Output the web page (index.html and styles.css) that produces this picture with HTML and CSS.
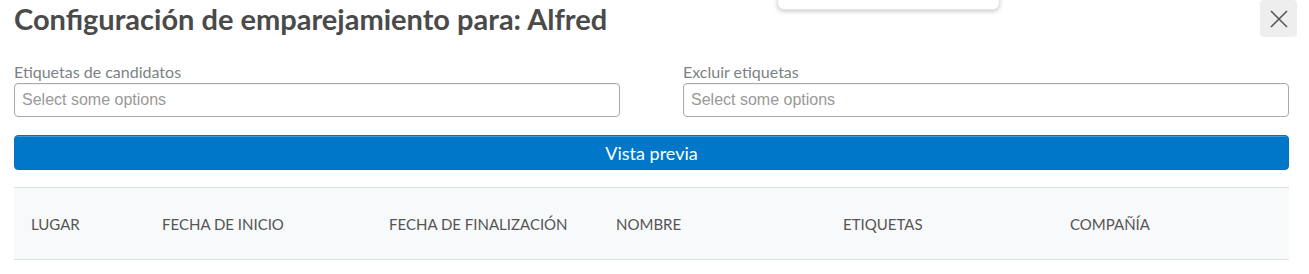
FILE: index.html
```html
<!DOCTYPE html>
<html lang="es">
<head>
<meta charset="utf-8">
<title>Configuración de emparejamiento</title>
<link rel="stylesheet" href="styles.css">
</head>
<body>
<div class="popup-tail"></div>
<div class="modal">
  <header class="modal-header">
    <h1 class="modal-title">Configuración de emparejamiento para: Alfred</h1>
    <button class="close-btn" type="button" aria-label="Cerrar">
      <svg width="18" height="18" viewBox="0 0 18 18"><path d="M1 1 L17 17 M17 1 L1 17" stroke="#555" stroke-width="1.6" fill="none"/></svg>
    </button>
  </header>
  <div class="filters">
    <div class="field">
      <label class="field-label">Etiquetas de candidatos</label>
      <div class="select">Select some options</div>
    </div>
    <div class="field">
      <label class="field-label">Excluir etiquetas</label>
      <div class="select">Select some options</div>
    </div>
  </div>
  <button class="preview-btn" type="button">Vista previa</button>
  <table class="results">
    <thead>
      <tr>
        <th class="c1">LUGAR</th>
        <th class="c2">FECHA DE INICIO</th>
        <th class="c2">FECHA DE FINALIZACIÓN</th>
        <th class="c2">NOMBRE</th>
        <th class="c2">ETIQUETAS</th>
        <th>COMPAÑÍA</th>
      </tr>
    </thead>
  </table>
</div>
</body>
</html>
```
FILE: styles.css
```css
html, body {
  margin: 0;
  padding: 0;
  background: #fff;
}
body {
  font-family: Lato, "Liberation Sans", sans-serif;
  color: #333;
  position: relative;
}
.popup-tail {
  position: absolute;
  left: 777px;
  top: -20px;
  width: 221px;
  height: 28px;
  background: #fff;
  border: 1px solid #e2e2e2;
  border-radius: 7px;
  box-shadow: 0 2px 4px rgba(0,0,0,0.18);
}
.modal {
  padding: 0 20px 0 14px;
}
.modal-header {
  display: flex;
  justify-content: space-between;
  align-items: flex-start;
  height: 62px;
  margin-right: -8px;
}
.modal-title {
  margin: 1px 0 0;
  font-size: 29px;
  font-weight: 700;
  color: #4a4a4a;
  line-height: 36px;
}
.close-btn {
  width: 37px;
  height: 37px;
  margin: 0;
  padding: 0;
  border: none;
  border-radius: 4px;
  background: #eeeeee;
  display: flex;
  align-items: center;
  justify-content: center;
}
.filters {
  display: grid;
  grid-template-columns: 606px 606px;
  column-gap: 63px;
}
.field {
  display: flex;
  flex-direction: column;
}
.field-label {
  font-size: 16px;
  color: #7c8285;
  line-height: 20px;
  height: 20px;
  margin-bottom: 1px;
}
.select {
  box-sizing: border-box;
  height: 34px;
  border: 1px solid #aaa;
  border-radius: 4px;
  padding: 0 7px;
  font-family: "Liberation Sans", Arial, sans-serif;
  font-size: 16px;
  color: #999;
  line-height: 32px;
  box-shadow: inset 0 1px 1px rgba(0,0,0,0.05);
}
.preview-btn {
  display: block;
  box-sizing: border-box;
  width: 1275px;
  height: 35px;
  margin-top: 18px;
  border: 1px solid #0a6fb6;
  border-radius: 4px;
  background: #0077c8;
  color: #fff;
  font-family: Lato, sans-serif;
  font-size: 18px;
  padding: 0;
  box-shadow: inset 0 1px 0 rgba(255,255,255,0.25);
}
.results {
  margin-top: 17px;
  width: 1275px;
  border-collapse: collapse;
  table-layout: fixed;
}
.results th {
  background: #f8f9fa;
  border-top: 1px solid #dee2e6;
  border-bottom: 1px solid #dee2e6;
  height: 71px;
  padding: 0 0 0 17px;
  text-align: left;
  font-weight: 400;
  font-size: 15px;
  color: #555;
}
.results th.c1 { width: 114px; }
.results th.c2 { width: 210px; }
```
